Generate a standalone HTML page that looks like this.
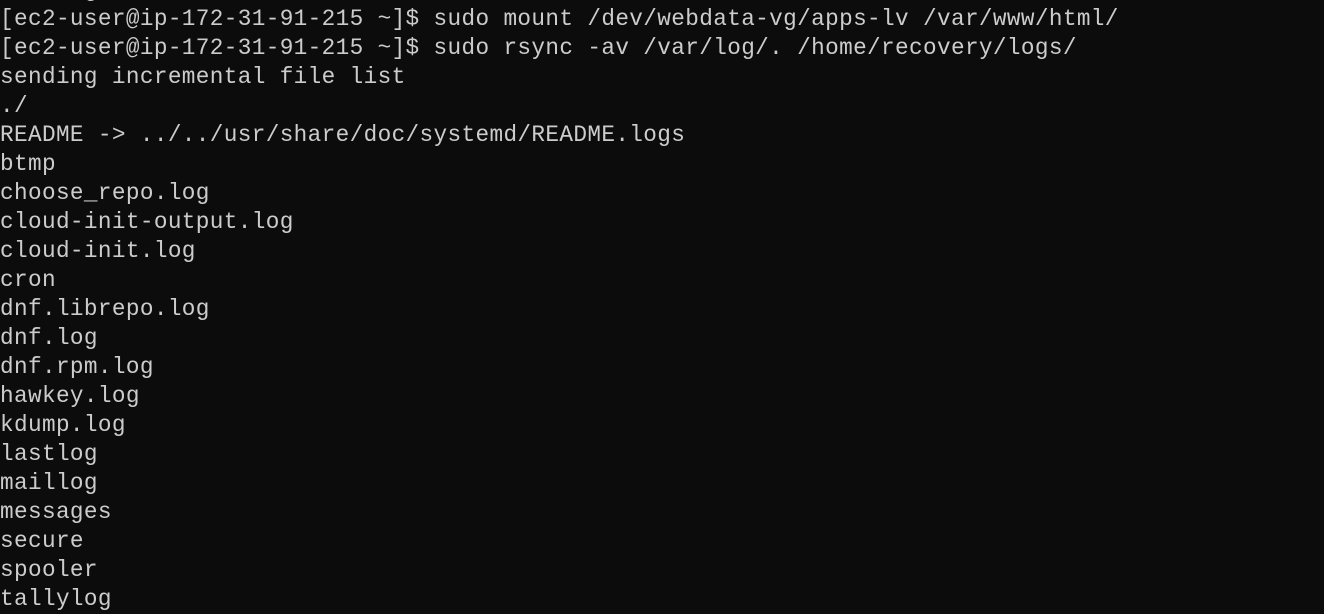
<!DOCTYPE html>
<html><head><style>
html,body{margin:0;padding:0;background:#0c0c0c;width:1324px;height:604px;overflow:hidden}
pre{position:absolute;left:0;top:-24.5px;margin:0;font-family:"Liberation Mono",monospace;font-size:22.7px;letter-spacing:0.37px;line-height:29px;color:#cccccc}
</style></head><body><pre>      g
[ec2-user@ip-172-31-91-215 ~]$ sudo mount /dev/webdata-vg/apps-lv /var/www/html/
[ec2-user@ip-172-31-91-215 ~]$ sudo rsync -av /var/log/. /home/recovery/logs/
sending incremental file list
./
README -> ../../usr/share/doc/systemd/README.logs
btmp
choose_repo.log
cloud-init-output.log
cloud-init.log
cron
dnf.librepo.log
dnf.log
dnf.rpm.log
hawkey.log
kdump.log
lastlog
maillog
messages
secure
spooler
tallylog</pre></body></html>
